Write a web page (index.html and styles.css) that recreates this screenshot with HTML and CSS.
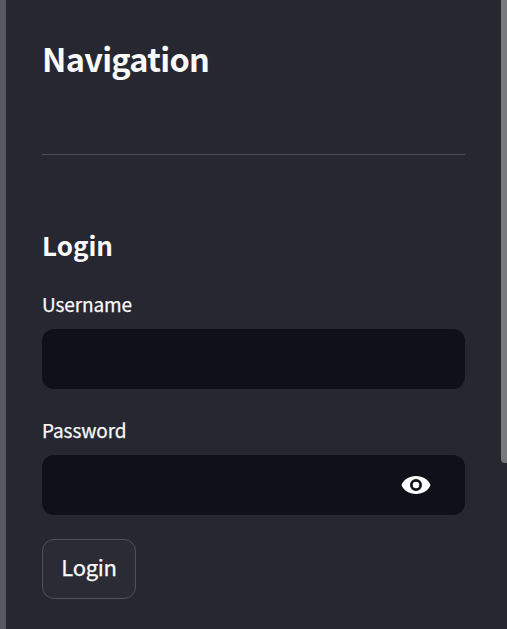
FILE: index.html
```html
<!DOCTYPE html>
<html lang="en">
<head>
<meta charset="utf-8">
<title>Navigation</title>
<link rel="stylesheet" href="styles.css">
</head>
<body>
<aside class="sidebar">
  <h1 class="title">Navigation</h1>
  <hr class="divider">
  <h2 class="subtitle">Login</h2>
  <form class="form">
    <label class="label" for="username">Username</label>
    <div class="field"><input class="input" id="username" type="text"></div>
    <label class="label" for="password">Password</label>
    <div class="field">
      <input class="input" id="password" type="password">
      <button class="reveal" type="button">
        <svg class="eye" viewBox="0 0 30 20"><path fill-rule="evenodd" d="M15 1C8 1 2.700 4.700 .5 10C2.700 15.300 8 19 15 19S27.300 15.300 29.500 10C27.300 4.700 22 1 15 1ZM15 16A6 6 0 1 1 15 4A6 6 0 0 1 15 16ZM15 6.700A3.300 3.300 0 1 0 15 13.300A3.300 3.300 0 0 0 15 6.700Z"/></svg>
      </button>
    </div>
    <button class="submit" type="button">Login</button>
  </form>
</aside>
<div class="scrollbar"></div>
</body>
</html>
```
FILE: styles.css
```css
* { box-sizing: border-box; }
body {
  margin: 0;
  height: 629px;
  overflow: hidden;
  display: flex;
  justify-content: space-between;
  background: #272731;
  color: #fafafa;
  font-family: "Noto Sans CJK SC", "Noto Sans", sans-serif;
}
.sidebar {
  width: 465px;
  height: 629px;
  padding: 36px 0 0 36px;
  border-left: 6px solid #56585d;
}
.title { margin: 0; font-size: 32.5px; line-height: 44px; font-weight: 700; letter-spacing: -0.7px; }
.divider { margin: 74px 0 74px; border: 0; height: 1px; background: #4c4d56; }
.subtitle { margin: 0 0 2px; font-size: 26px; line-height: 32px; font-weight: 700; }
.form { display: flex; flex-direction: column; align-items: flex-start; }
.label {
  margin-top: 27px;
  font-size: 19px;
  line-height: 28px;
  letter-spacing: -0.1px;
  -webkit-text-stroke: 0.25px currentColor;
}
.field {
  display: flex;
  align-items: center;
  width: 100%;
  height: 60px;
  margin-top: 11px;
  border-radius: 12px;
  background: #0e1118;
}
.input {
  flex: 1;
  min-width: 0;
  height: 100%;
  padding: 0 18px;
  border: 0;
  outline: 0;
  background: transparent;
  color: inherit;
  font: inherit;
}
.reveal { display: flex; margin-right: 34px; padding: 0; border: 0; background: none; }
.eye { width: 30px; height: 20px; fill: #fff; }
.submit {
  width: 94px;
  height: 60px;
  margin-top: 24px;
  padding: 0 0 7px;
  border: 1px solid #50515a;
  border-radius: 12px;
  background: #2b2b36;
  color: inherit;
  font: 400 22px/32px "Noto Sans CJK SC", "Noto Sans", sans-serif;
  letter-spacing: -0.3px;
  -webkit-text-stroke: 0.25px currentColor;
}
.scrollbar { width: 6px; height: 463px; border-radius: 0 0 0 4px; background: #77787e; }
```
